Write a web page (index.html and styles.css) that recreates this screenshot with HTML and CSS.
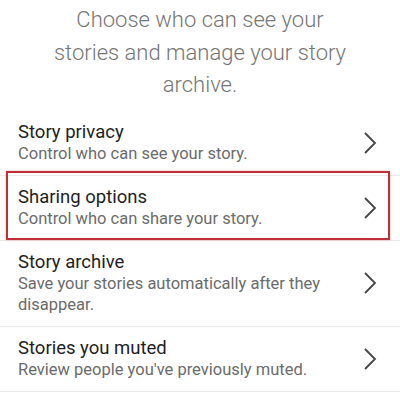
FILE: index.html
```html
<!DOCTYPE html>
<html lang="en">

<head>
    <meta charset="UTF-8">
    <meta name="viewport" content="width=device-width, initial-scale=1.0">
    <title>Story settings</title>
    <link rel="stylesheet" href="styles.css">
</head>

<body>
    <p class="intro">Choose who can see your<br>stories and manage your story<br>archive.</p>

    <ul class="settings">
        <li class="row">
            <div class="text">
                <div class="title">Story privacy</div>
                <div class="sub">Control who can see your story.</div>
            </div>
            <svg class="chev" width="14" height="22" viewBox="0 0 14 22"><polyline points="2,1 12,11 2,21" /></svg>
        </li>
        <li class="row highlight">
            <div class="text">
                <div class="title">Sharing options</div>
                <div class="sub">Control who can share your story.</div>
            </div>
            <svg class="chev" width="14" height="22" viewBox="0 0 14 22"><polyline points="2,1 12,11 2,21" /></svg>
        </li>
        <li class="row">
            <div class="text">
                <div class="title">Story archive</div>
                <div class="sub">Save your stories automatically after they<br>disappear.</div>
            </div>
            <svg class="chev" width="14" height="22" viewBox="0 0 14 22"><polyline points="2,1 12,11 2,21" /></svg>
        </li>
        <li class="row">
            <div class="text">
                <div class="title">Stories you muted</div>
                <div class="sub">Review people you've previously muted.</div>
            </div>
            <svg class="chev" width="14" height="22" viewBox="0 0 14 22"><polyline points="2,1 12,11 2,21" /></svg>
        </li>
    </ul>
</body>

</html>
```

FILE: styles.css
```css
body {
    margin: 0;
    background-color: #fff;
    font-family: Roboto, "Liberation Sans", sans-serif;
}

.intro {
    margin: 0;
    padding: 4px 0 9px;
    text-align: center;
    font-size: 22px;
    font-weight: 300;
    line-height: 32.5px;
    color: #757575;
}

.settings {
    list-style: none;
    margin: 0;
    padding: 0;
}

.row {
    display: flex;
    align-items: center;
    padding: 11px 23px 11px 18px;
    border-bottom: 1px solid #ebebeb;
}

.text {
    flex: 1;
}

.title {
    font-size: 18.5px;
    line-height: 21px;
    color: #1e1e1e;
}

.sub {
    font-size: 16.5px;
    line-height: 21px;
    color: #6b6b6b;
}

.chev {
    fill: none;
    stroke: #444;
    stroke-width: 1.8;
}

/* red outline drawn over the second row */
.highlight {
    position: relative;
}

.highlight::after {
    content: '';
    position: absolute;
    top: -5px;
    left: 6px;
    right: 10px;
    bottom: 0;
    border: 2px solid #bf2f38;
    box-shadow: 0 0 2px rgba(220, 90, 90, 0.5);
}
```
